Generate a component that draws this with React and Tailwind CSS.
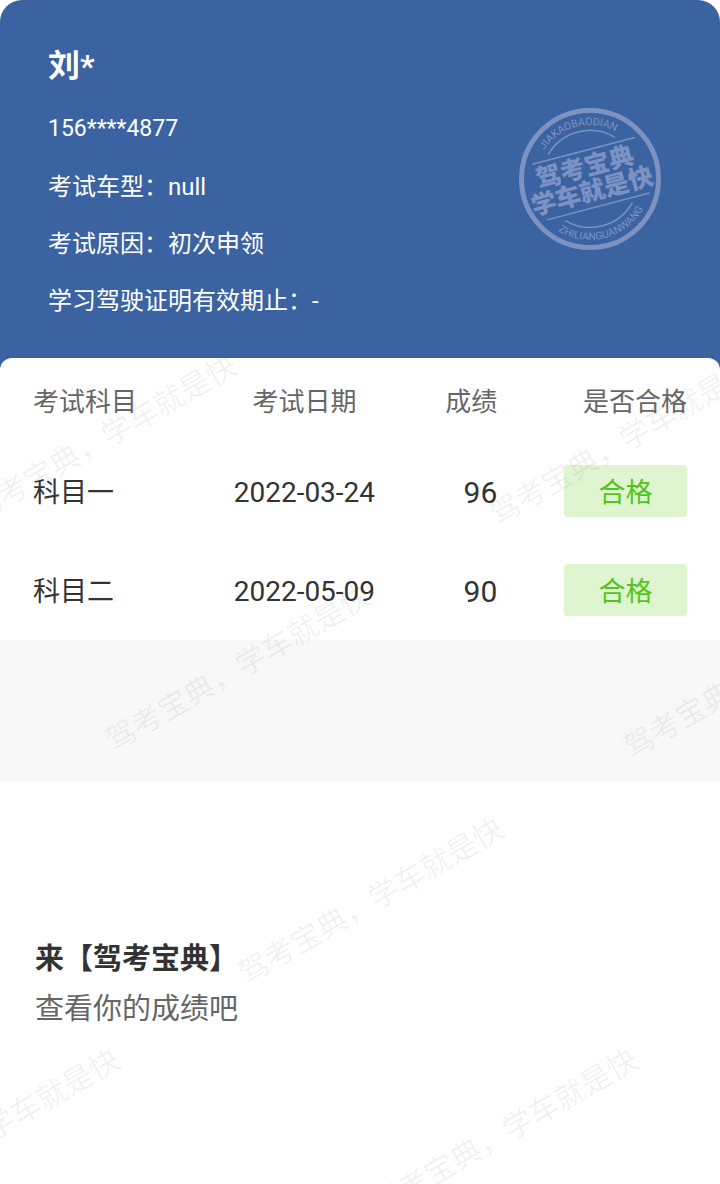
const profile = {
    name: "刘*",
    phone: "156****4877",
    details: [
        { label: "考试车型", value: "null" },
        { label: "考试原因", value: "初次申领" },
        { label: "学习驾驶证明有效期止", value: "-" },
    ],
};

const results = [
    { subject: "科目一", date: "2022-03-24", score: 96, status: "合格" },
    { subject: "科目二", date: "2022-05-09", score: 90, status: "合格" },
];

// centre points of the watermark stamps, measured from the top of the sheet
const watermarks = [
    "left-[104px] top-[80px]",
    "left-[622px] top-[84px]",
    "left-[238px] top-[310px]",
    "left-[756px] top-[317px]",
    "left-[371px] top-[543px]",
    "left-[-13px] top-[774px]",
    "left-[505px] top-[774px]",
];

const Stamp = () => (
    <svg viewBox="-71 -71 142 142" className="w-[142px] h-[142px] shrink-0" fill="none" stroke="#7b92c3" aria-hidden="true">
        <defs>
            <path id="ring-top" d="M-54 0A54 54 0 0 1 54 0" />
            <path id="ring-bottom" d="M-61 0A61 61 0 0 0 61 0" />
        </defs>
        <circle r="68.5" strokeWidth="5" />
        <g transform="rotate(-14.7)">
            <path d="M-52 -28.8H54M-52 28.6H54" strokeWidth="1.5" />
            <path d="M-34.3 -34.3A48.5 48.5 0 0 1 34.7 -34" strokeWidth="1.5" />
            <path d="M-34.5 34A48.5 48.5 0 0 0 35 33.6" strokeWidth="1.5" />
            <g fill="#7b92c3" stroke="none" textAnchor="middle">
                <g fontSize="25" fontWeight="900">
                    <text x="-2" y="-4">驾考宝典</text>
                    <text x="-1" y="21">学车就是快</text>
                </g>
                <g fontSize="10.5">
                    <text><textPath href="#ring-top" startOffset="50%">JIAKAOBAODIAN</textPath></text>
                    <text><textPath href="#ring-bottom" startOffset="50%">ZHILIANGUANWANG</textPath></text>
                </g>
            </g>
        </g>
    </svg>
);

const ProfileHeader = () => (
    <header className="flex items-start justify-between rounded-t-[22px] bg-[#3b63a1] pl-12 pr-[59px] pt-[46px] pb-10 text-white">
        <div className="leading-[57px]">
            <h1 className="text-[32px] leading-10 font-bold">{profile.name}</h1>
            <p className="mt-3.5 text-[23px]">{profile.phone}</p>
            <div className="pt-0.5 text-[24px]">
                {profile.details.map(item => (
                    <p key={item.label}>{item.label}：{item.value}</p>
                ))}
            </div>
        </div>
        <div className="pt-[62px]">
            <Stamp />
        </div>
    </header>
);

const ResultTable = () => (
    <div className="px-[33px] pb-px">
        <table className="w-full table-fixed">
            <thead>
                <tr className="h-[83px] text-[26px] text-[#666666]">
                    <th className="w-[26%] pt-1.5 text-left font-normal">考试科目</th>
                    <th className="w-[31%] pt-1.5 text-center font-normal">考试日期</th>
                    <th className="w-[14%] pt-1.5 text-right font-normal">成绩</th>
                    <th className="pt-1.5 text-right font-normal">是否合格</th>
                </tr>
            </thead>
            <tbody>
                {results.map(row => (
                    <tr key={row.subject} className="h-[99px] text-[27px] text-[#333333]">
                        <td className="pt-1.5">{row.subject}</td>
                        <td className="pt-1 text-center text-[28px]">{row.date}</td>
                        <td className="pt-1 text-right text-[30px]">{row.score}</td>
                        <td>
                            <span className="ml-auto flex h-[52px] w-[123px] items-center justify-center rounded bg-[#def5d0] pt-1.5 text-[#52c41a]">
                                {row.status}
                            </span>
                        </td>
                    </tr>
                ))}
            </tbody>
        </table>
    </div>
);

const Watermark = () => (
    <div className="pointer-events-none absolute inset-0 overflow-hidden" aria-hidden="true">
        {watermarks.map(place => (
            <span
                key={place}
                className={`absolute -translate-x-1/2 -translate-y-1/2 -rotate-30 whitespace-nowrap text-[30px] text-black/6 ${place}`}
            >
                驾考宝典，学车就是快
            </span>
        ))}
    </div>
);

const App = () => {
    return (
        <div className="flex min-h-screen flex-col bg-white font-['Roboto','Noto_Sans_CJK_SC',sans-serif]">
            <ProfileHeader />
            <main className="relative -mt-3 grow overflow-hidden rounded-t-xl bg-white">
                <ResultTable />
                <div className="h-[142px] bg-[#f8f8f8]" />
                <section className="px-[35px] pt-[152px] pb-[150px] text-[29px] leading-[50px]">
                    <h2 className="font-bold text-[#333333]">来【驾考宝典】</h2>
                    <p className="text-[#666666]">查看你的成绩吧</p>
                </section>
                <Watermark />
            </main>
        </div>
    );
};

export default App;
